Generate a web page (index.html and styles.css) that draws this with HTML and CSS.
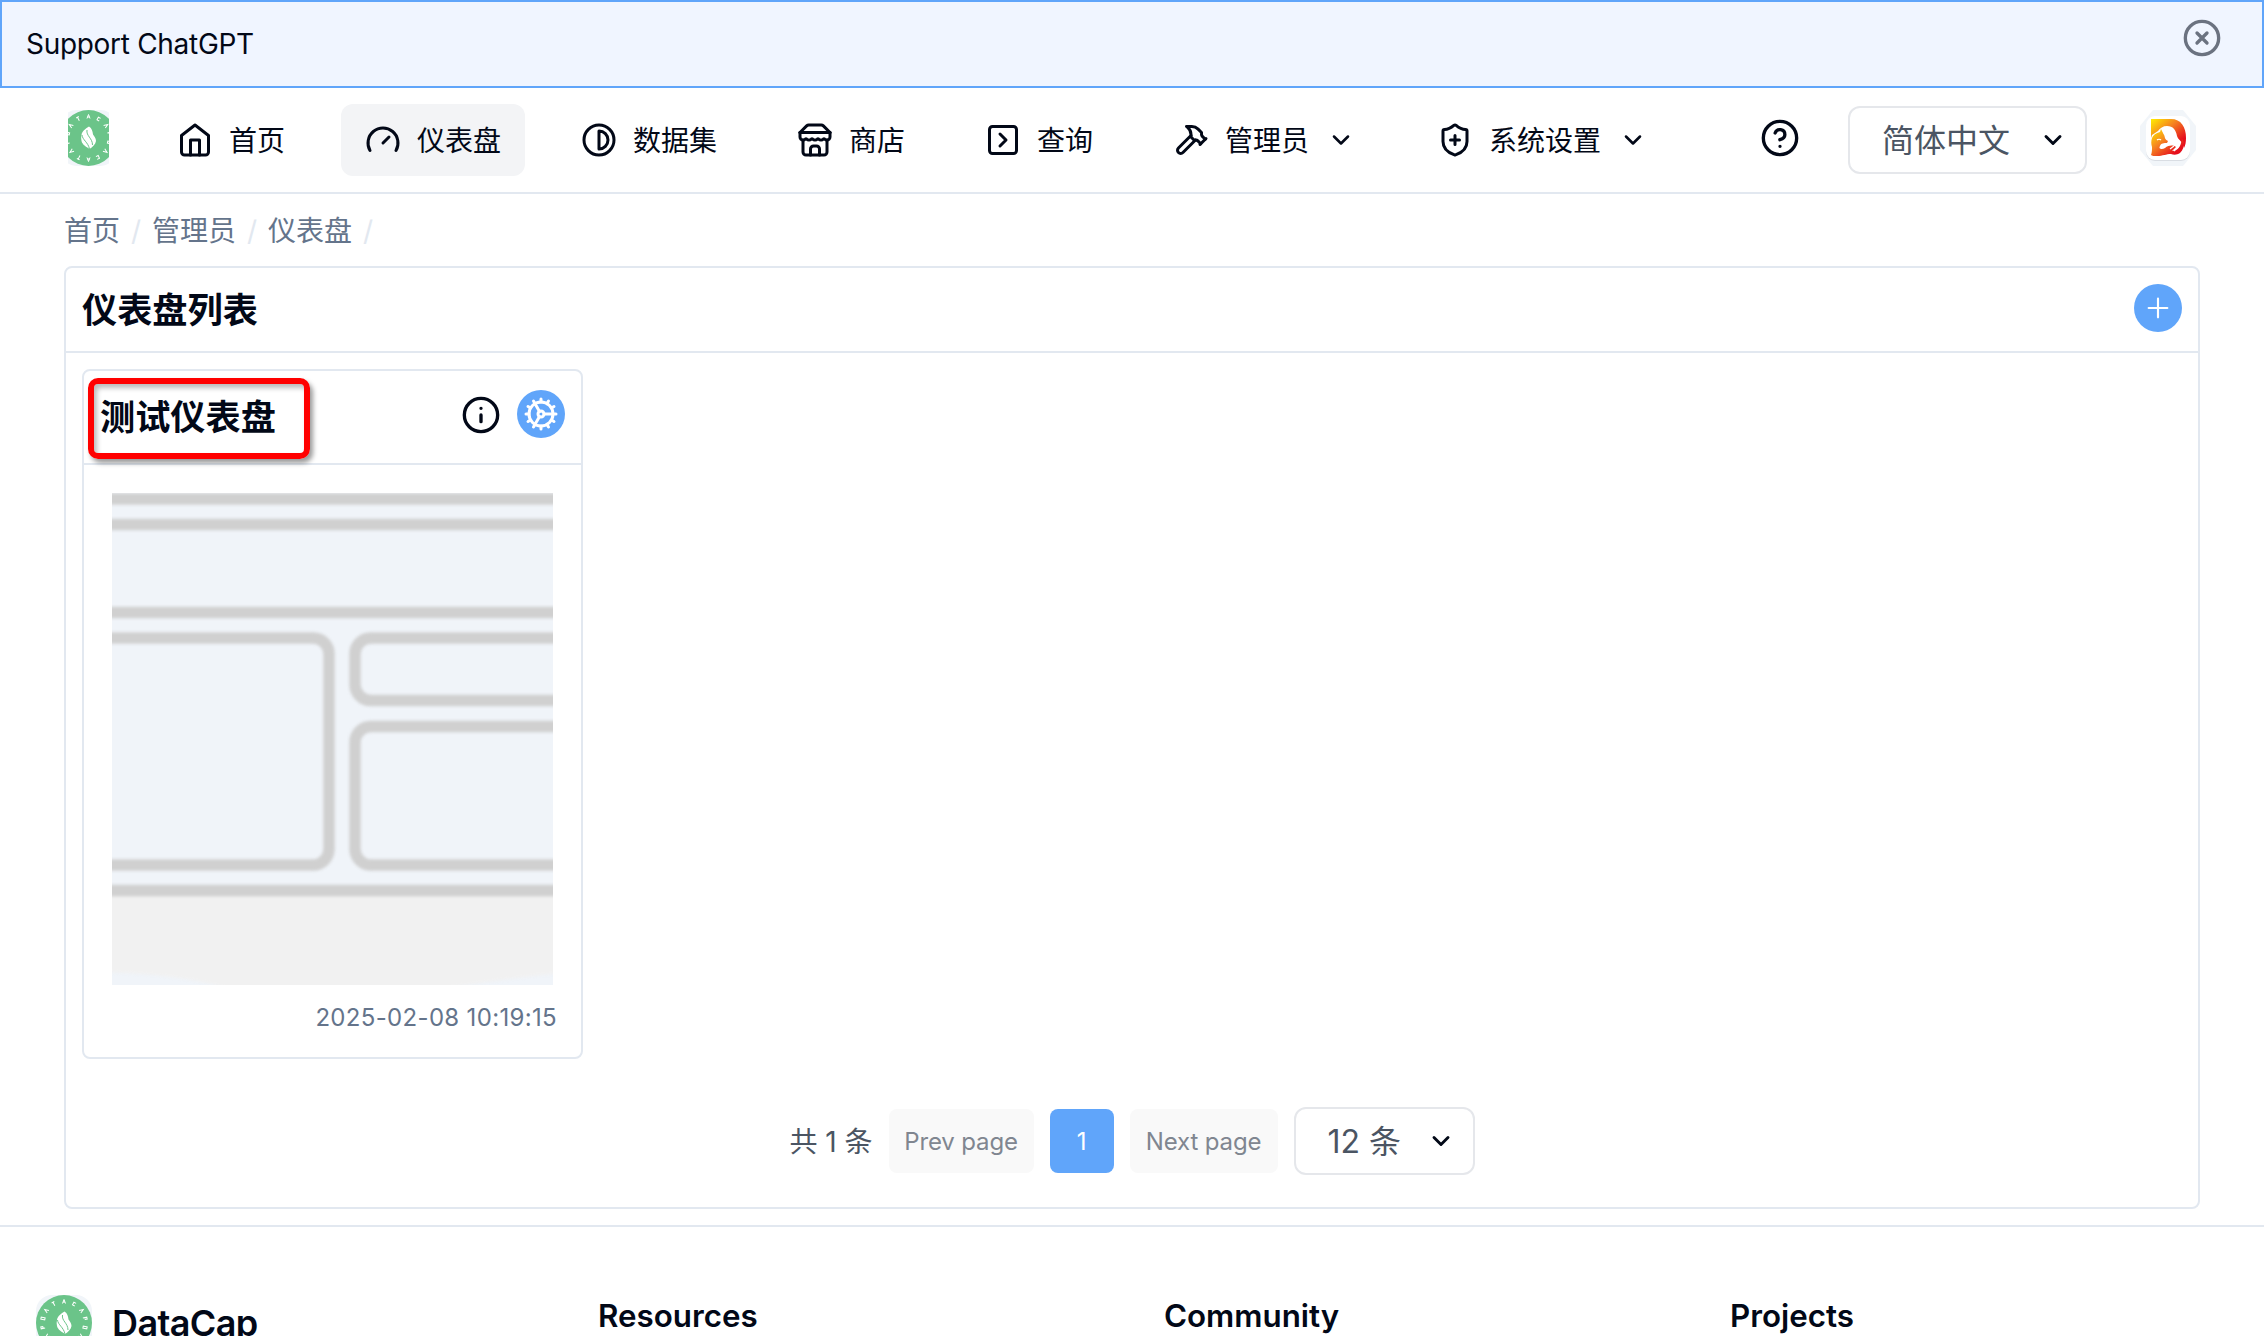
FILE: index.html
```html
<!DOCTYPE html>
<html lang="zh-CN">
<head>
<meta charset="utf-8">
<title>DataCap</title>
<link rel="stylesheet" href="styles.css">
</head>
<body>
<svg class="defs" width="0" height="0">
  <symbol id="chev" viewBox="0 0 24 24"><path d="m6 9 6 6 6-6"/></symbol>
  <symbol id="brand" viewBox="0 0 56 56">
    <rect width="56" height="56" rx="16" fill="#f1f5f9" stroke="none"/>
    <circle cx="28" cy="28" r="28" fill="#6bc489" stroke="none"/>
    <g fill="none" stroke="#fff" stroke-width="1">
      <path d="M26.500 8.500 28 4.500l1.500 4M27 7h2"/>
      <path d="M26.500 4.500h3M28 4.500v4" transform="rotate(-28 28 28)"/>
      <path d="M29.500 5h-2.500v3h2.500" transform="rotate(28 28 28)"/>
      <path d="M26.500 8.500 28 4.500l1.500 4" transform="rotate(-55 28 28)"/>
      <path d="M26.500 8.500 28 4.500l1.500 4" transform="rotate(55 28 28)"/>
      <path d="M27 8.500v-4h2v2h-2" transform="rotate(78 28 28)"/>
      <path d="M27 8.500v-4h2v4z" transform="rotate(-78 28 28)"/>
      <path d="M27 8.500v-4h2v4z" transform="rotate(102 28 28)"/>
      <path d="M27 8.500v-4h2v2h-2" transform="rotate(-102 28 28)"/>
      <path d="M26.500 8.500 28 4.500l1.500 4" transform="rotate(128 28 28)"/>
      <path d="M26.500 8.500 28 4.500l1.500 4" transform="rotate(-128 28 28)"/>
      <path d="M29.500 5h-2.500v3h2.500" transform="rotate(154 28 28)"/>
      <path d="M26.500 4.500h3M28 4.500v4" transform="rotate(-154 28 28)"/>
      <path d="M26.500 8.500 28 4.500l1.500 4M27 7h2" transform="rotate(180 28 28)"/>
    </g>
    <path d="M28.500 16.500c-3 2-7 4.500-7.500 8.500-.5 2-.5 4 0 6 1 4 4.500 5.500 8 8 3-2 6-4.500 6.500-8 0-3-2-5-3-6.500-.500-3.500-1-6-4-8z" fill="#fff" stroke="none"/>
    <path d="M21.500 25c.5 5 6 7 7.500 14M26.500 20c-1 6 5.500 8 5.500 15" fill="none" stroke="#6bc489" stroke-width="1"/>
  </symbol>
</svg>
<div class="banner">
  <span>Support ChatGPT</span>
  <svg class="icon close" viewBox="0 0 24 24"><circle cx="12" cy="12" r="10"/><path d="m15 9-6 6M9 9l6 6"/></svg>
</div>
<header class="header">
  <svg class="logo" viewBox="7.5 0 41 56"><use href="#brand" width="56" height="56"/></svg>
  <nav class="nav">
    <a class="item"><svg class="icon" viewBox="0 0 24 24"><path d="m3 9 9-7 9 7v11a2 2 0 0 1-2 2H5a2 2 0 0 1-2-2z"/><path d="M9 22V12h6v10"/></svg><span>首页</span></a>
    <a class="item active"><svg class="icon" viewBox="0 0 24 24"><path d="m12 14 4-4"/><path d="M3.34 19a10 10 0 1 1 17.32 0"/></svg><span>仪表盘</span></a>
    <a class="item"><svg class="icon" viewBox="0 0 24 24"><circle cx="12" cy="12" r="10"/><path d="M12 18a6 6 0 0 0 0-12v12z"/></svg><span>数据集</span></a>
    <a class="item"><svg class="icon" viewBox="0 0 24 24"><path d="m2 7 4.41-4.41A2 2 0 0 1 7.83 2h8.34a2 2 0 0 1 1.42.59L22 7"/><path d="M4 12v8a2 2 0 0 0 2 2h12a2 2 0 0 0 2-2v-8"/><path d="M15 22v-4a2 2 0 0 0-2-2h-2a2 2 0 0 0-2 2v4"/><path d="M2 7h20"/><path d="M22 7v3a2 2 0 0 1-2 2a2.7 2.7 0 0 1-1.59-.63.7.7 0 0 0-.82 0A2.7 2.7 0 0 1 16 12a2.7 2.7 0 0 1-1.59-.63.7.7 0 0 0-.82 0A2.7 2.7 0 0 1 12 12a2.7 2.7 0 0 1-1.59-.63.7.7 0 0 0-.82 0A2.7 2.7 0 0 1 8 12a2.7 2.7 0 0 1-1.59-.63.7.7 0 0 0-.82 0A2.7 2.7 0 0 1 4 12a2 2 0 0 1-2-2V7"/></svg><span>商店</span></a>
    <a class="item"><svg class="icon" viewBox="0 0 24 24"><rect x="3" y="3" width="18" height="18" rx="2"/><path d="m10 8 4 4-4 4"/></svg><span>查询</span></a>
    <a class="item"><svg class="icon" viewBox="0 0 24 24"><path d="m15 12-8.373 8.373a1 1 0 1 1-3-3L12 9"/><path d="m18 15 4-4"/><path d="m21.5 11.5-1.914-1.914A2 2 0 0 1 19 8.172V7l-2.26-2.26a6 6 0 0 0-4.202-1.756L9 2.96l.92.82A6.18 6.18 0 0 1 12 8.4V10l2 2h1.172a2 2 0 0 1 1.414.586L18.5 14.5"/></svg><span>管理员</span><svg class="icon chev" viewBox="0 0 24 24"><use href="#chev"/></svg></a>
    <a class="item"><svg class="icon" viewBox="0 0 24 24"><path d="M20 13c0 5-3.5 7.5-7.66 8.95a1 1 0 0 1-.67-.01C7.5 20.5 4 18 4 13V6a1 1 0 0 1 1-1c2 0 4.500-1.200 6.240-2.720a1.170 1.170 0 0 1 1.520 0C14.510 3.810 17 5 19 5a1 1 0 0 1 1 1z"/><path d="M9 12h6M12 9v6"/></svg><span>系统设置</span><svg class="icon chev" viewBox="0 0 24 24"><use href="#chev"/></svg></a>
  </nav>
  <div class="tools">
    <svg class="icon help" viewBox="0 0 24 24"><circle cx="12" cy="12" r="10"/><path d="M9.090 9a3 3 0 0 1 5.830 1c0 2-3 3-3 3M12 17h.01"/></svg>
    <div class="select lang"><span>简体中文</span><svg class="icon chev" viewBox="0 0 24 24"><use href="#chev"/></svg></div>
    <svg class="avatar" viewBox="0 0 56 56">
      <defs><linearGradient id="fox" x1="0" y1="0" x2="1" y2="1"><stop offset="0" stop-color="#ffee00"/><stop offset=".4" stop-color="#f58220"/><stop offset=".8" stop-color="#e60f1c"/></linearGradient></defs>
      <path d="M13 0h30l13 16v24L43 56H13L0 40V16z" fill="#f1f5f9"/>
      <rect x="6" y="7" width="44" height="44" rx="9" fill="#d9dde3"/>
      <rect x="6" y="6" width="44" height="44" rx="9" fill="#fff"/>
      <path d="M11 9h20c10 0 15 8 15 19 0 4-.5 7-2 10-2-8-6-8-7-12-1-6-4-10-10-10-4 0-7 2-9 5l-6 4-1 3z" fill="url(#fox)"/>
      <path d="M12 28c1-3 4-5 8-6l1-3 2.500 5c2 3 .5 5 4.500 7l-1 2c-3 0-6 0-7 3-2 3 2 4 5 2 4-3 8-3 11-1l-4 4c4 0 8-3 9-8l1-4 2 3c0 5-1 8-4 11-3 2-6 2-9 1-5 0-8 2-14 2-3 0-5 0-6-1 1-3 1-5 1-8-1-3-1-6 0-9z" fill="url(#fox)"/>
      <path d="M17 30c1-1 3-1 4 0M30 39l4-3M34 41l5-5" fill="none" stroke="#fff" stroke-width="1.200"/>
    </svg>
  </div>
</header>
<main class="main">
  <div class="crumbs"><span>首页</span><i>/</i><span>管理员</span><i>/</i><span>仪表盘</span><i>/</i></div>
  <section class="panel">
    <div class="panel-head">
      <h2>仪表盘列表</h2>
      <span class="round"><svg class="icon plus" viewBox="0 0 24 24"><path d="M5 12h14M12 5v14"/></svg></span>
    </div>
    <div class="panel-body">
      <article class="card">
        <div class="card-head">
          <h2>测试仪表盘</h2>
          <div class="mark"></div>
          <svg class="icon info" viewBox="0 0 24 24"><circle cx="12" cy="12" r="10"/><path d="M12 16v-4M12 8h.01"/></svg>
          <span class="round"><svg class="icon cog" viewBox="0 0 24 24"><path d="M12 20a8 8 0 1 0 0-16 8 8 0 0 0 0 16Z"/><path d="M12 14a2 2 0 1 0 0-4 2 2 0 0 0 0 4Z"/><path d="M12 2v2M12 22v-2M17 20.660l-1-1.730M11 10.270 7 3.340M20.660 17l-1.730-1M3.340 7l1.730 1M14 12h8M2 12h2M20.660 7l-1.730 1M3.340 17l1.730-1M17 3.340l-1 1.730M11 13.730l-4 6.930"/></svg></span>
        </div>
        <svg class="preview" viewBox="0 0 441 492">
          <rect width="441" height="492" fill="#f0f4f9"/>
          <g class="soft">
            <path d="M-20 398h482v81q-60 5-120 15H110Q60 480-20 479z" fill="#f1f1f1"/>
            <g fill="none" stroke="#d0d0d0" stroke-width="11.500">
              <path d="M-20 6h482M-20 397.500h482"/>
              <rect x="-40" y="31.500" width="520" height="88"/>
              <rect x="-60" y="145" width="277" height="227" rx="16"/>
              <rect x="243" y="145" width="260" height="62.500" rx="16"/>
              <rect x="243" y="233.500" width="260" height="138.500" rx="16"/>
            </g>
          </g>
        </svg>
        <time>2025-02-08 10:19:15</time>
      </article>
      <div class="pager">
        <span class="total">共 1 条</span>
        <span class="btn prev">Prev page</span>
        <span class="btn current">1</span>
        <span class="btn next">Next page</span>
        <div class="select size"><span>12 条</span><svg class="icon chev" viewBox="0 0 24 24"><use href="#chev"/></svg></div>
      </div>
    </div>
  </section>
</main>
<footer class="footer">
  <div class="brand"><svg viewBox="0 0 56 56"><use href="#brand"/></svg><span>DataCap</span></div>
  <h3>Resources</h3>
  <h3>Community</h3>
  <h3>Projects</h3>
</footer>
</body>
</html>
```
FILE: styles.css
```css
* { box-sizing: border-box; }
html { height: 1336px; overflow: hidden; }
body { margin: 0; height: 1336px; overflow: hidden; background: #fff; color: #020817; font: 28px/40px Inter, "Noto Sans CJK SC", sans-serif; }
h2, h3 { margin: 0; font-weight: 600; }
.defs { position: absolute; }
.icon { width: 36px; height: 36px; flex: none; fill: none; stroke: currentColor; stroke-width: 2; stroke-linecap: round; stroke-linejoin: round; }
.icon.chev { width: 28px; height: 28px; margin: 0 2px; stroke-width: 2.2; }

.banner { height: 88px; border: 2px solid #60a5fa; background: #f0f5ff; padding: 0 40px 0 24px; display: flex; align-items: center; justify-content: space-between; letter-spacing: -.3px; }
.icon.close { width: 40px; height: 40px; margin-bottom: 12px; color: #6b7280; }

.header { height: 106px; border-bottom: 2px solid #e2e8f0; padding: 0 68px; display: flex; align-items: center; }
.logo { width: 41px; height: 56px; margin-bottom: 4px; }
.nav { display: flex; gap: 32px; margin-left: 44px; }
.item { height: 72px; padding: 0 24px; display: flex; align-items: center; gap: 16px; border-radius: 12px; white-space: nowrap; }
.item span, .select span { padding-top: 1px; }
.item.active { background: #f3f4f6; }
.tools { margin-left: auto; display: flex; align-items: center; }
.icon.help { width: 40px; height: 40px; margin: 0 48px 4px 0; }
.select { height: 68px; border: 2px solid #e5e7eb; border-radius: 12px; display: flex; align-items: center; justify-content: space-between; font-size: 32px; color: #4b5563; }
.select .chev { color: #020817; stroke-width: 2.5; }
.lang { width: 239px; padding: 0 16px 0 32px; }
.avatar { width: 56px; height: 56px; margin: 0 0 4px 53px; }

.main { padding: 0 64px; }
.crumbs { height: 72px; display: flex; align-items: center; gap: 11px; padding-top: 2px; color: #64748b; }
.crumbs i { width: 10px; color: #e2e8f0; font-style: normal; }
.panel { height: 943px; border: 2px solid #e2e8f0; border-radius: 8px; }
.panel-head { height: 85px; border-bottom: 2px solid #e2e8f0; padding: 0 16px; display: flex; justify-content: space-between; align-items: center; }
h2 { font-size: 35.2px; }
.round { width: 48px; height: 48px; margin-bottom: 3px; border-radius: 50%; background: #60a5fa; color: #fff; display: flex; align-items: center; justify-content: center; }
.icon.plus { width: 32px; height: 32px; stroke-width: 1.6; }
.panel-body { padding: 16px; }
.card { width: 501px; height: 690px; border: 2px solid #e2e8f0; border-radius: 8px; }
.card-head { position: relative; height: 94px; border-bottom: 2px solid #e2e8f0; padding: 0 16px; display: flex; align-items: center; }
.mark { position: absolute; left: 4px; top: 7px; width: 222px; height: 81px; border: 6px solid #f00; border-radius: 10px; box-shadow: 3px 4px 5px #0006, inset 3px 4px 5px #0004; }
.icon.info { width: 40px; height: 40px; margin: 0 16px 5px auto; }
.card .round { margin-bottom: 6px; }
.icon.cog { width: 36px; height: 36px; }
.preview { display: block; width: 441px; height: 492px; margin: 28px 0 0 28px; }
.soft { filter: blur(1.5px); }
time { display: block; margin: 13px 24px 0 0; text-align: right; font-size: 24px; letter-spacing: .33px; color: #64748b; }
.pager { margin-top: 48px; display: flex; align-items: center; justify-content: center; gap: 16px; color: #4b5563; }
.btn { height: 64px; border-radius: 8px; background: #f9f9f9; color: #808690; font-size: 24px; line-height: 66px; letter-spacing: -.15px; text-align: center; }
.prev { width: 145px; }
.next { width: 148px; }
.total { padding-top: 1px; }
.btn.current { width: 64px; background: #60a5fa; color: #fff; }
.size { width: 181px; padding: 0 16px 0 32px; }

.footer { margin-top: 16px; height: 111px; border-top: 2px solid #e2e8f0; padding: 68px 0 0 32px; display: grid; grid-template-columns: repeat(4, 566px); }
.brand { display: flex; align-items: center; height: 56px; gap: 20px; font-size: 36px; font-weight: 600; letter-spacing: -.6px; padding-left: 4px; }
.brand svg { width: 56px; height: 56px; }
h3 { font-size: 31.3px; padding-top: 1px; }
```
